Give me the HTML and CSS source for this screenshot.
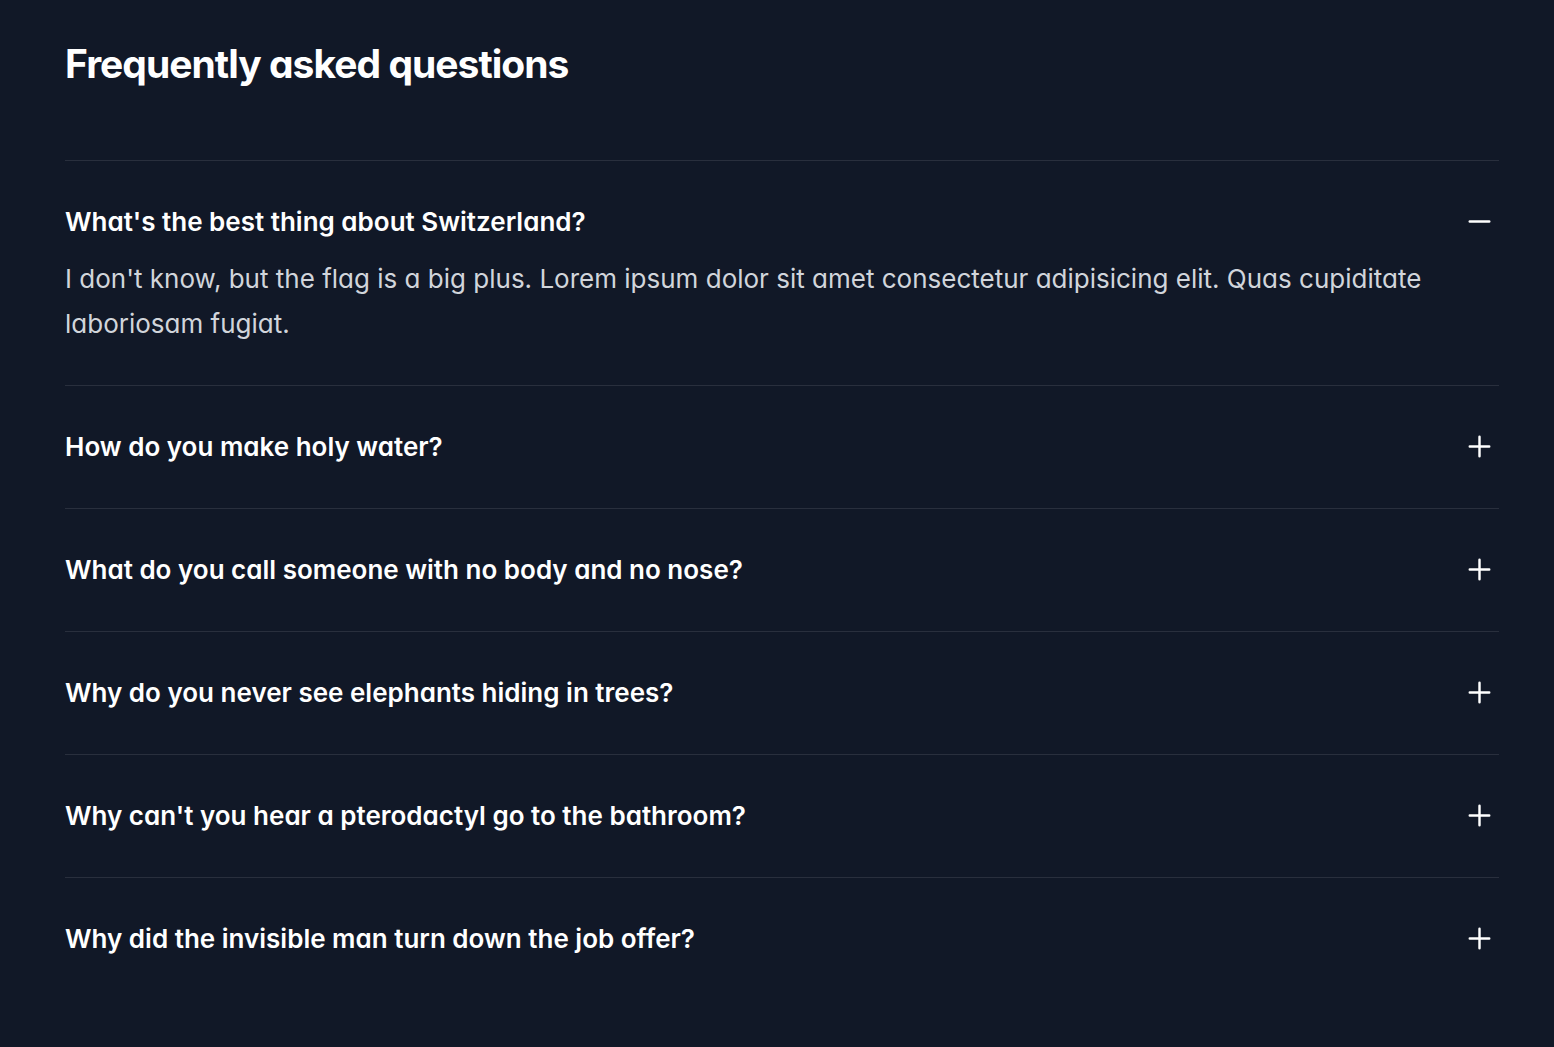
FILE: index.html
```html
<!DOCTYPE html>
<html lang="en">
<head>
<meta charset="utf-8">
<meta name="viewport" content="width=device-width, initial-scale=1">
<title>Frequently asked questions</title>
<link rel="stylesheet" href="styles.css">
</head>
<body>
<main class="faq">
  <h1 class="faq-title">Frequently asked questions</h1>
  <dl class="faq-list">
    <div class="faq-item">
      <dt><button class="faq-question" type="button" aria-expanded="true" aria-controls="answer-1"><span>What's the best thing about Switzerland?</span><svg class="faq-icon" viewBox="0 0 24 24" aria-hidden="true"><path d="M18 12H6"/></svg></button></dt>
      <dd class="faq-answer" id="answer-1"><p>I don't know, but the flag is a big plus. Lorem ipsum dolor sit amet consectetur adipisicing elit. Quas cupiditate laboriosam fugiat.</p></dd>
    </div>
    <div class="faq-item">
      <dt><button class="faq-question" type="button" aria-expanded="false"><span>How do you make holy water?</span><svg class="faq-icon" viewBox="0 0 24 24" aria-hidden="true"><path d="M12 6v12m6-6H6"/></svg></button></dt>
    </div>
    <div class="faq-item">
      <dt><button class="faq-question" type="button" aria-expanded="false"><span>What do you call someone with no body and no nose?</span><svg class="faq-icon" viewBox="0 0 24 24" aria-hidden="true"><path d="M12 6v12m6-6H6"/></svg></button></dt>
    </div>
    <div class="faq-item">
      <dt><button class="faq-question" type="button" aria-expanded="false"><span>Why do you never see elephants hiding in trees?</span><svg class="faq-icon" viewBox="0 0 24 24" aria-hidden="true"><path d="M12 6v12m6-6H6"/></svg></button></dt>
    </div>
    <div class="faq-item">
      <dt><button class="faq-question" type="button" aria-expanded="false"><span>Why can't you hear a pterodactyl go to the bathroom?</span><svg class="faq-icon" viewBox="0 0 24 24" aria-hidden="true"><path d="M12 6v12m6-6H6"/></svg></button></dt>
    </div>
    <div class="faq-item">
      <dt><button class="faq-question" type="button" aria-expanded="false"><span>Why did the invisible man turn down the job offer?</span><svg class="faq-icon" viewBox="0 0 24 24" aria-hidden="true"><path d="M12 6v12m6-6H6"/></svg></button></dt>
    </div>
  </dl>
</main>
</body>
</html>
```

FILE: styles.css
```css
* {
  box-sizing: border-box;
  margin: 0;
}

body {
  background: #111827;
  color: #fff;
  font-family: Inter, "Liberation Sans", sans-serif;
  font-feature-settings: "cv11";
}

.faq {
  padding: 32px 55px 32px 65px;
}

.faq-title {
  font-size: 39px;
  font-weight: 700;
  line-height: 64px;
  letter-spacing: -0.025em;
}

.faq-list {
  margin-top: 64px;
}

.faq-item {
  padding: 38px 0 39px;
  border-top: 1px solid rgba(255, 255, 255, 0.1);
}

.faq-question {
  display: flex;
  align-items: center;
  justify-content: space-between;
  gap: 38px;
  width: 100%;
  padding: 0;
  border: 0;
  background: none;
  color: inherit;
  font: inherit;
  font-feature-settings: inherit;
  font-size: 26px;
  font-weight: 600;
  line-height: 45px;
  text-align: left;
  cursor: pointer;
}

.faq-icon {
  flex: none;
  width: 39px;
  height: 39px;
  fill: none;
  stroke: currentColor;
  stroke-width: 1.5;
  stroke-linecap: round;
  stroke-linejoin: round;
}

.faq-answer {
  margin-top: 12px;
  padding-right: 64px;
  color: #d1d5db;
  font-size: 26px;
  line-height: 45px;
}
```
